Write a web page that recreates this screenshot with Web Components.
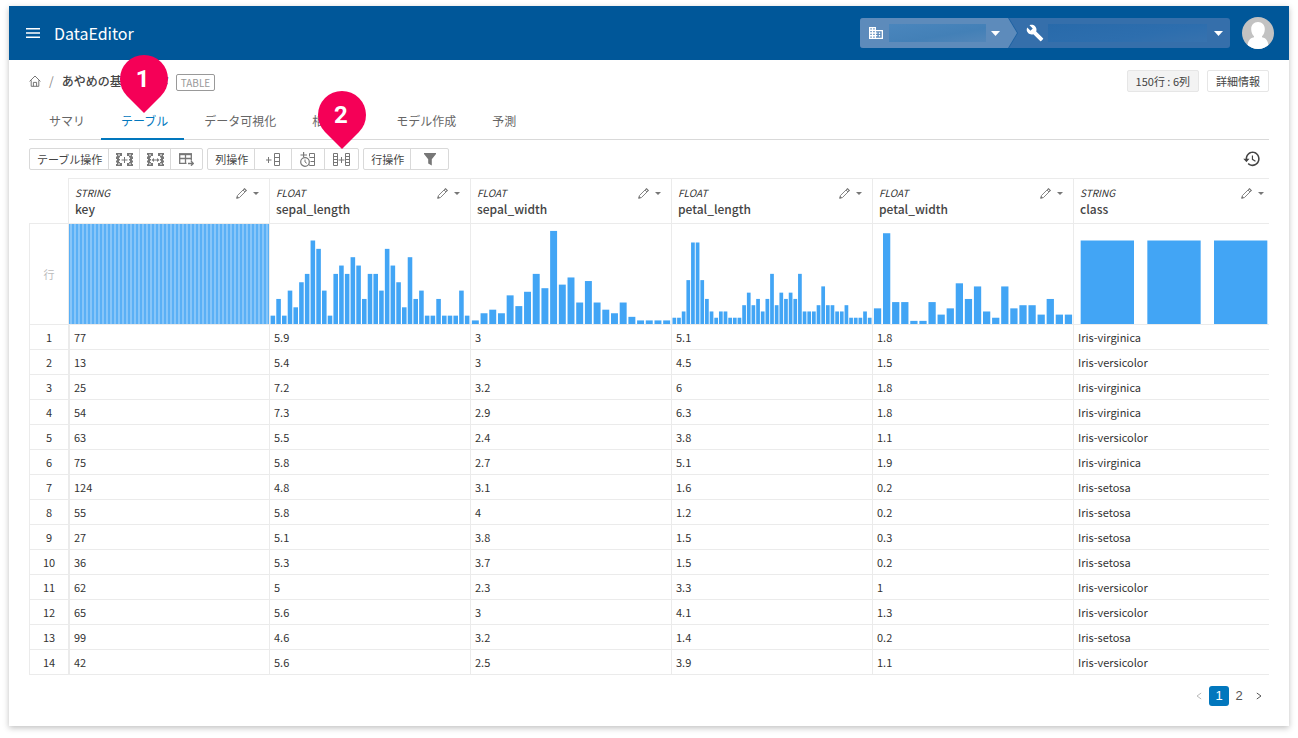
<!DOCTYPE html>
<html lang="ja">
<head>
<meta charset="utf-8">
<meta name="viewport" content="width=device-width, initial-scale=1">
<title>DataEditor</title>
<style>
  html { background: #fff; }
  body { margin: 0; color: #444; font: 12px/16px "Noto Sans CJK JP", "Noto Sans", sans-serif; }
</style>
</head>
<body>
<app-shell>
  <app-header slot="header"></app-header>
  <crumb-bar></crumb-bar>
  <tab-bar></tab-bar>
  <tool-bar></tool-bar>
  <data-grid></data-grid>
  <page-nav></page-nav>
</app-shell>

<script>
const base = `<style>
  :host { display: block; }
  *, ::before, ::after { box-sizing: border-box; }
  button, select, input { font: inherit; color: inherit; margin: 0; padding: 0; border: 0; background: none; cursor: pointer; }
  a { color: inherit; text-decoration: none; }
  svg { display: block; }
</style>`;

function define(name, html, setup) {
  customElements.define(name, class extends HTMLElement {
    constructor() {
      super();
      const t = document.createElement('template');
      t.innerHTML = base + html;
      this.attachShadow({ mode: 'open' }).append(t.content.cloneNode(true));
    }
    connectedCallback() { if (setup) setup(this, this.shadowRoot); }
  });
}

/* Each icon: [width, height, markup] */
const ladder = x => `<path d="M${x}.5 .5h5v12h-5zM${x}.5 4.5h5M${x}.5 8.5h5" fill="none" stroke="currentColor"/>`;
const grid = `<path fill-rule="evenodd" d="M0 0h6v3H4v1.500H3V6h1v1.500H3V9h1v1h2v3H0v-2h1V9.500H0v-2h1V6H0V3.500h1V2H0zM2 1.500v1h2v-1zM2 10.500v1h2v-1zM17 0h-6v3h2v1.500h1V6h-1v1.500h1V9h-1v1h-2v3h6v-2h-1V9.500h1v-2h-1V6h1V3.500h-1V2h1zM15 1.500v1h-2v-1zM15 10.500v1h-2v-1z"/>`;
const ICONS = {
  menu: [14, 10, '<path d="M0 0h14v1.5H0zM0 4.2h14v1.5H0zM0 8.4h14v1.5H0z"/>'],
  office: [14, 12, '<path fill-rule="evenodd" d="M0 0h7v3h7v9H0zM1.3 1.3v1.2h1.5V1.3zM4.2 1.3v1.2h1.5V1.3zM1.3 4v1.2h1.5V4zM4.2 4v1.2h1.5V4zM1.3 6.7v1.2h1.5V6.7zM4.2 6.7v1.2h1.5V6.7zM1.3 9.5v1.2h1.5V9.5zM4.2 9.5v1.2h1.5V9.5zM7 4.3v1.2h1.4v1.3H7v1.2h1.4v1.3H7v1.4h5.7V4.3zM9.8 5.6h1.4v1.3H9.8zM9.8 8.1h1.4v1.3H9.8z"/>'],
  wrench: [18, 18, '<path transform="scale(.75)" d="M22.7 19l-9.1-9.1c.9-2.3.4-5-1.5-6.9-2-2-5-2.4-7.4-1.3L9 6 6 9 1.6 4.7C.4 7.1.9 10.1 2.9 12.1c1.9 1.9 4.6 2.4 6.9 1.5l9.1 9.1c.4.4 1 .4 1.4 0l2.3-2.3c.5-.4.5-1.1.1-1.4z"/>'],
  caret: [9, 5, '<path d="M0 0h9L4.500 5z"/>'],
  smallcaret: [6, 3, '<path d="M0 0h6L3 3z"/>'],
  home: [12, 12, '<path fill="none" stroke="currentColor" stroke-width=".9" d="M.6 6.400 6 1l5.400 5.400M2.200 5.300v6h7.600v-6M4.400 11.300V7.400h3.200v3.900"/>'],
  avatar: [32, 32, '<clipPath id="c"><circle cx="16" cy="16" r="16"/></clipPath><g clip-path="url(#c)"><path fill="#c2c2c2" d="M0 0h32v32H0z"/><path fill="#fff" d="M16 5c4.300 0 7 3.200 6.800 7.500-.1 3-1.200 5.300-2.800 6.700v1c4.500.9 6.500 4 7 12H5c.5-8 2.500-11.100 7-12v-1c-1.600-1.400-2.700-3.700-2.800-6.700C9 8.200 11.700 5 16 5z"/></g>'],
  tableadd: [17, 13, grid + '<path d="M8 4h1v2.500h2.500v1H9V10H8V7.500H5.500v-1H8z"/>'],
  tablemerge: [17, 13, grid + '<path d="M4.500 7 7 5v1.500h3V5l2.500 2L10 9V7.500H7V9z"/>'],
  tableexport: [15, 13, '<path fill="none" stroke="currentColor" stroke-width="1.300" d="M7.500 10.400H.7V1h11.600v6.500M.7 5.500h11.600M6.500 1v9.400M9 10.500h5M12 8l2.300 2.500-2.300 2.200"/><path d="M0 .4h13v1.800H0z"/>'],
  coladd: [14, 13, '<path d="M2 4h1v2.500h2.500v1H3V10H2V7.500H0v-1h2z"/>' + ladder(8)],
  coltime: [16, 15, '<path d="M3 0h1.200v2.500H7v1H4.200V5H3V3.500H.5v-1H3z"/><path fill="none" stroke="currentColor" d="M9.500 4.500v-3h5v12h-5v-1M9.500 5.500h5M10.500 9.500h4"/><circle cx="5" cy="10" r="4.300" fill="none" stroke="currentColor" stroke-width="1.200"/><path fill="none" stroke="currentColor" d="M5 7.500V10l1.800 1.300"/>'],
  colmerge: [17, 13, '<path fill="none" stroke="currentColor" d="M.5.500h4v12h-4zM.5 3.500h4M.5 6.500h4M.5 9.500h4M12.500.500h4v12h-4zM12.500 3.500h4M12.500 6.500h4M12.500 9.500h4"/><path d="M8 4h1v2.500h2.500v1H9V10H8V7.500H5.500v-1H8z"/>'],
  filter: [12, 13, '<path d="M0 0h12v1L7.800 6.200V12.500L4.200 10.500V6.200L0 1z"/>'],
  history: [18, 16, '<path transform="translate(-.5 -2) scale(.78 .82)" d="M13 3c-4.970 0-9 4.030-9 9H1l3.890 3.890.07.14L9 12H6c0-3.870 3.130-7 7-7s7 3.130 7 7-3.130 7-7 7c-1.930 0-3.680-.79-4.940-2.060l-1.420 1.420C8.270 19.990 10.510 21 13 21c4.970 0 9-4.030 9-9s-4.030-9-9-9zm-1 5v5l4.280 2.540.72-1.210-3.500-2.080V8H12z"/>'],
  pencil: [11, 11, '<path fill="none" stroke="currentColor" stroke-width=".9" d="M.7 10.300l.7-2.700L8.200.8l2 2-6.800 6.800zM7 2l2 2"/><path d="M.4 10.600l.8-2.600 1.800 1.800zM7.800.8 8.600 0 11 2.400l-.8.8z"/>'],
  prev: [6, 8, '<path fill="none" stroke="currentColor" d="M5.200 1 1 4l4.200 3"/>'],
  next: [6, 8, '<path fill="none" stroke="currentColor" d="M.8 1 5 4 .8 7"/>']
};
define('ui-icon', '<style>:host { display: inline-block; flex: none; }</style><div></div>', (host, root) => {
  const [w, h, body] = ICONS[host.getAttribute('name')];
  root.querySelector('div').innerHTML =
    `<svg width="${w}" height="${h}" viewBox="0 0 ${w} ${h}" fill="currentColor" aria-hidden="true">${body}</svg>`;
});

/* Numbered teardrop whose tip rests on the element it marks */
define('step-pin', `<style>
  :host { position: absolute; left: 50%; z-index: 5; width: 48px; height: 58px; margin-left: -24px; pointer-events: none; }
  .drop { position: absolute; inset: 0 0 auto 0; height: 48px; background: #f50057; border-radius: 50% 50% 0 50%; transform: rotate(45deg); }
  .num { position: relative; padding-right: 2px; font: 700 24px/48px Roboto, sans-serif; color: #fff; text-align: center; }
</style><div class="drop"></div><div class="num"><slot></slot></div>`);

define('app-shell', `<style>
  :host { padding: 6px 9px 12px; }
  .card { min-height: calc(100vh - 18px); background: #fff; box-shadow: 0 2px 6px rgba(0,0,0,.25); }
  main { padding: 0 20px 20px; }
</style><div class="card"><slot name="header"></slot><main><slot></slot></main></div>`);

define('app-header', `<style>
  header { display: flex; align-items: center; height: 54px; padding: 0 15px 0 17px; background: #005799; color: #fff; }
  .menu { display: flex; margin-right: 14px; }
  h1 { margin: 0; font-size: 16px; line-height: 24px; font-weight: 400; }
  .scope { display: flex; width: 370px; height: 30px; margin: 0 12px 0 auto; border-radius: 3px; overflow: hidden; background: #356fab; }
  .org, .proj { display: flex; align-items: center; }
  .org { width: 157px; height: 100%; padding: 0 17px 0 9px; background: #5d8bbb; clip-path: polygon(0 0, 148px 0, 100% 50%, 148px 100%, 0 100%); }
  .edge { width: 158px; flex: none; background: #1e62a2; clip-path: polygon(0 0, 149px 0, 100% 50%, 149px 100%, 0 100%); }
  .proj { flex: 1; padding: 0 7px 0 8px; }
  select { appearance: none; flex: 1; min-width: 0; height: 18px; margin: 0 5px 0 6px; }
  .org select { background: linear-gradient(170deg, #4a86bd, #4380b7 60%, #5286b9); }
  .proj select { margin-left: 4px; margin-right: 7px; background: linear-gradient(170deg, #286aaa, #2d6eae 60%, #3772ae); }
</style>
<header>
  <button class="menu" aria-label="メニュー"><ui-icon name="menu"></ui-icon></button>
  <h1>DataEditor</h1>
  <div class="scope">
    <div class="edge"><label class="org"><ui-icon name="office"></ui-icon><select aria-label="組織"></select><ui-icon name="caret"></ui-icon></label></div>
    <label class="proj"><ui-icon name="wrench"></ui-icon><select aria-label="プロジェクト"></select><ui-icon name="caret"></ui-icon></label>
  </div>
  <ui-icon name="avatar"></ui-icon>
</header>`);

define('crumb-bar', `<style>
  :host { display: flex; align-items: center; height: 42px; }
  nav { display: flex; align-items: center; color: #666; }
  nav a { display: flex; }
  .sep { margin: 0 8px; color: #888; }
  strong { font-weight: 500; color: #444; }
  .tag { margin: 2px 0 0 6px; padding: 0 4px; border: 1px solid #999; border-radius: 2px; font-size: 10px; line-height: 15px; color: #999; }
  .info { display: flex; gap: 8px; margin-left: auto; font-size: 11px; color: #444; }
  .info > * { padding: 0 8px; border: 1px solid #e6e6e6; border-radius: 2px; line-height: 20px; }
  .count { background: #f3f3f3; }
</style>
<nav aria-label="パンくず"><a href="#" aria-label="ホーム"><ui-icon name="home"></ui-icon></a><span class="sep">/</span><strong>あやめの基本データ</strong><span class="tag">TABLE</span></nav>
<div class="info"><span class="count">150行 : 6列</span><button>詳細情報</button></div>`);

define('tab-bar', `<style>
  nav { display: flex; height: 38px; border-bottom: 1px solid #d9d9d9; color: #666; }
  a { position: relative; height: 38px; padding: 0 16px 0 20px; line-height: 37px; white-space: nowrap; }
  a[aria-current] { color: #0277bd; border-bottom: 2px solid #0277bd; }
  .one { top: -47px; margin-left: -23px; }
</style>
<nav aria-label="表示">
  <a href="#">サマリ</a>
  <a href="#" aria-current="page">テーブル<step-pin class="one">1</step-pin></a>
  <a href="#">データ可視化</a>
  <a href="#">相関分析</a>
  <a href="#">モデル作成</a>
  <a href="#">予測</a>
</nav>`);

define('tool-group', `<style>
  :host { display: flex; height: 22px; border: 1px solid #d9d9d9; border-radius: 2px; font-size: 11px; line-height: 20px; color: #444; }
  ::slotted(*) { border-right: 1px solid #d9d9d9 !important; }
  ::slotted(:last-child) { border-right: 0 !important; }
</style><slot></slot>`);

define('tool-bar', `<style>
  :host { display: flex; align-items: center; gap: 4px; padding: 8px 8px 8px 0; }
  .name { padding: 0 6px 0 7px; white-space: nowrap; }
  button { position: relative; display: flex; align-items: center; justify-content: center; width: 31px; color: #777; }
  .mid { width: 33px; }
  .wide { width: 37px; }
  step-pin { bottom: 100%; }
  .log { width: 18px; margin-left: auto; color: #444; }
</style>
<tool-group><span class="name">テーブル操作</span><button aria-label="行を結合"><ui-icon name="tableadd"></ui-icon></button><button aria-label="テーブルを結合"><ui-icon name="tablemerge"></ui-icon></button><button aria-label="テーブルを出力"><ui-icon name="tableexport"></ui-icon></button></tool-group>
<tool-group><span class="name">列操作</span><button class="wide" aria-label="列を追加"><ui-icon name="coladd"></ui-icon></button><button class="mid" aria-label="時間列を追加"><ui-icon name="coltime"></ui-icon></button><button class="mid" aria-label="列を結合"><ui-icon name="colmerge"></ui-icon><step-pin>2</step-pin></button></tool-group>
<tool-group><span class="name">行操作</span><button class="wide" aria-label="絞り込み"><ui-icon name="filter"></ui-icon></button></tool-group>
<button class="log" aria-label="履歴"><ui-icon name="history"></ui-icon></button>`);

/* Histogram: bars fill 80% of their band; scale is pixels of height per count */
define('bar-chart', '<style>:host { height: 100px; }</style><div></div>', (host, root) => {
  const counts = host.getAttribute('counts').split(',').map(Number);
  const scale = Number(host.getAttribute('scale'));
  const band = 200 / counts.length;
  const bars = counts.map((n, i) =>
    `<rect x="${(i + .1) * band}" y="${100 - n * scale}" width="${band * .8}" height="${n * scale}"/>`).join('');
  root.querySelector('div').innerHTML =
    `<svg width="100%" height="100" viewBox="0 0 200 100" preserveAspectRatio="none" fill="#42a5f5" aria-hidden="true">${bars}</svg>`;
});

const COLUMNS = [
  ['STRING', 'key', Array(150).fill(1), 100],
  ['FLOAT', 'sepal_length', [1,3,1,4,2,5,6,10,9,4,1,6,7,6,8,7,3,6,6,4,9,7,5,2,8,3,4,1,1,3,1,1,1,4,1], 8.35],
  ['FLOAT', 'sepal_width', [1,3,4,3,8,5,9,14,10,26,11,13,6,12,6,4,3,6,2,1,1,1,1], 3.58],
  ['FLOAT', 'petal_length', [1,1,2,7,13,13,7,4,2,1,2,2,1,1,1,3,5,3,4,2,4,8,3,5,4,5,4,8,2,2,2,3,6,3,3,2,2,3,1,1,1,2,1], 6.27],
  ['FLOAT', 'petal_width', [5,29,7,7,1,1,7,3,5,13,8,12,4,2,12,5,6,6,3,8,3,3], 3.13],
  ['STRING', 'class', [50,50,50], 1.67]
];
const ROWS = [
  [77,5.9,3,5.1,1.8,'Iris-virginica'], [13,5.4,3,4.5,1.5,'Iris-versicolor'],
  [25,7.2,3.2,6,1.8,'Iris-virginica'], [54,7.3,2.9,6.3,1.8,'Iris-virginica'],
  [63,5.5,2.4,3.8,1.1,'Iris-versicolor'], [75,5.8,2.7,5.1,1.9,'Iris-virginica'],
  [124,4.8,3.1,1.6,0.2,'Iris-setosa'], [55,5.8,4,1.2,0.2,'Iris-setosa'],
  [27,5.1,3.8,1.5,0.3,'Iris-setosa'], [36,5.3,3.7,1.5,0.2,'Iris-setosa'],
  [62,5,2.3,3.3,1,'Iris-versicolor'], [65,5.6,3,4.1,1.3,'Iris-versicolor'],
  [99,4.6,3.2,1.4,0.2,'Iris-setosa'], [42,5.6,2.5,3.9,1.1,'Iris-versicolor']
];

define('data-grid', `<style>
  :host { overflow: hidden; }
  table { width: calc(100% + 6px); table-layout: fixed; border-collapse: separate; border-spacing: 0; font-size: 11px; color: #333; }
  col:first-child { width: 40px; }
  th, td { padding: 0; border: solid #ebebeb; border-width: 0 1px 1px 0; text-align: left; font-weight: 400; }
  thead th { height: 46px; border-top-width: 1px; padding: 0 6px; vertical-align: top; }
  .top { display: flex; align-items: center; height: 14px; margin-top: 7px; padding-right: 4px; font-size: 10px; line-height: 14px; }
  .top em { flex: 1; }
  .top button { display: flex; color: #777; }
  .top .more { margin-left: 6px; }
  .name { font-size: 12px; line-height: 18px; font-weight: 500; color: #444; }
  tbody th { border-left-width: 1px; text-align: center; }
  .hist th { color: #bbb; height: 101px; }
  .row > * { height: 25px; line-height: 24px; padding-left: 4px; }
  .row > th { padding: 0; }
  .row > th + td { border-left-width: 1px; }
</style>
<table><colgroup></colgroup><thead></thead><tbody></tbody></table>`, (host, root) => {
  root.querySelector('colgroup').innerHTML = '<col>'.repeat(COLUMNS.length + 1);
  root.querySelector('thead').innerHTML = '<tr><td></td>' + COLUMNS.map(([type, name]) =>
    `<th scope="col"><div class="top"><em>${type}</em><button aria-label="${name} を編集"><ui-icon name="pencil"></ui-icon></button><button class="more" aria-label="${name} のメニュー"><ui-icon name="smallcaret"></ui-icon></button></div><div class="name">${name}</div></th>`).join('') + '</tr>';
  root.querySelector('tbody').innerHTML =
    '<tr class="hist"><th scope="row">行</th>' + COLUMNS.map(([, , counts, scale]) =>
      `<td><bar-chart counts="${counts}" scale="${scale}"></bar-chart></td>`).join('') + '</tr>' +
    ROWS.map((row, i) => `<tr class="row"><th scope="row">${i + 1}</th>${row.map(v => `<td>${v}</td>`).join('')}</tr>`).join('');
});

define('page-nav', `<style>
  nav { display: flex; justify-content: flex-end; margin-top: 11px; font: 13px/20px "Liberation Sans", Arial, sans-serif; color: #555; }
  button { display: flex; align-items: center; justify-content: center; width: 20px; height: 20px; border-radius: 3px; }
  [aria-current] { background: #0277bd; color: #fff; }
  :disabled { color: #bbb; cursor: default; }
</style>
<nav aria-label="ページ"><button disabled aria-label="前へ"><ui-icon name="prev"></ui-icon></button><button aria-current="page">1</button><button>2</button><button aria-label="次へ"><ui-icon name="next"></ui-icon></button></nav>`);
</script>
</body>
</html>
